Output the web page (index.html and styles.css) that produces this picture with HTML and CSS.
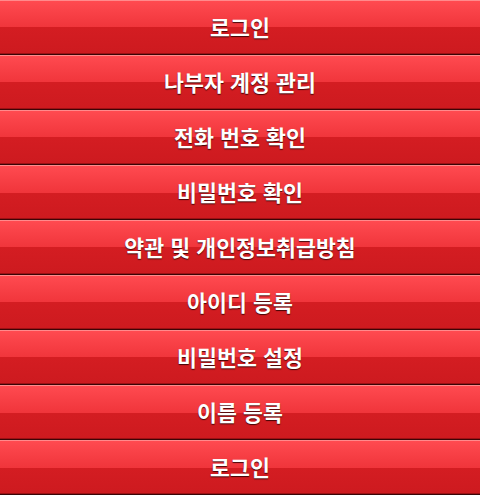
FILE: index.html
```html
<!DOCTYPE html>
<html lang="ko">
<head>
<meta charset="utf-8">
<link rel="stylesheet" href="styles.css">
</head>
<body>
<nav class="menu">
  <a class="btn" href="#">로그인</a>
  <a class="btn" href="#">나부자 계정 관리</a>
  <a class="btn" href="#">전화 번호 확인</a>
  <a class="btn" href="#">비밀번호 확인</a>
  <a class="btn" href="#">약관 및 개인정보취급방침</a>
  <a class="btn" href="#">아이디 등록</a>
  <a class="btn" href="#">비밀번호 설정</a>
  <a class="btn" href="#">이름 등록</a>
  <a class="btn" href="#">로그인</a>
</nav>
</body>
</html>
```
FILE: styles.css
```css
html, body {
  margin: 0;
  padding: 0;
  background: #1a0000;
}
.menu {
  display: flex;
  flex-direction: column;
  width: 480px;
}
.btn {
  display: flex;
  align-items: center;
  justify-content: center;
  height: 52px;
  padding-bottom: 1px;
  box-sizing: content-box;
  border-top: 1px solid #ff8a8c;
  border-bottom: 1px solid #3a0506;
  box-shadow: inset 0 -1px 0 #9c1014;
  background: linear-gradient(to bottom, #ff4a50 0%, #f0353b 50%, #d41d22 50%, #cd1a1f 100%);
  color: #fff;
  text-decoration: none;
  font-family: "Noto Sans CJK KR", "Noto Sans", sans-serif;
  font-weight: bold;
  font-size: 21.7px;
  line-height: 1;
  text-shadow: 0 1px 1px rgba(40, 0, 0, 0.85);
}
```
